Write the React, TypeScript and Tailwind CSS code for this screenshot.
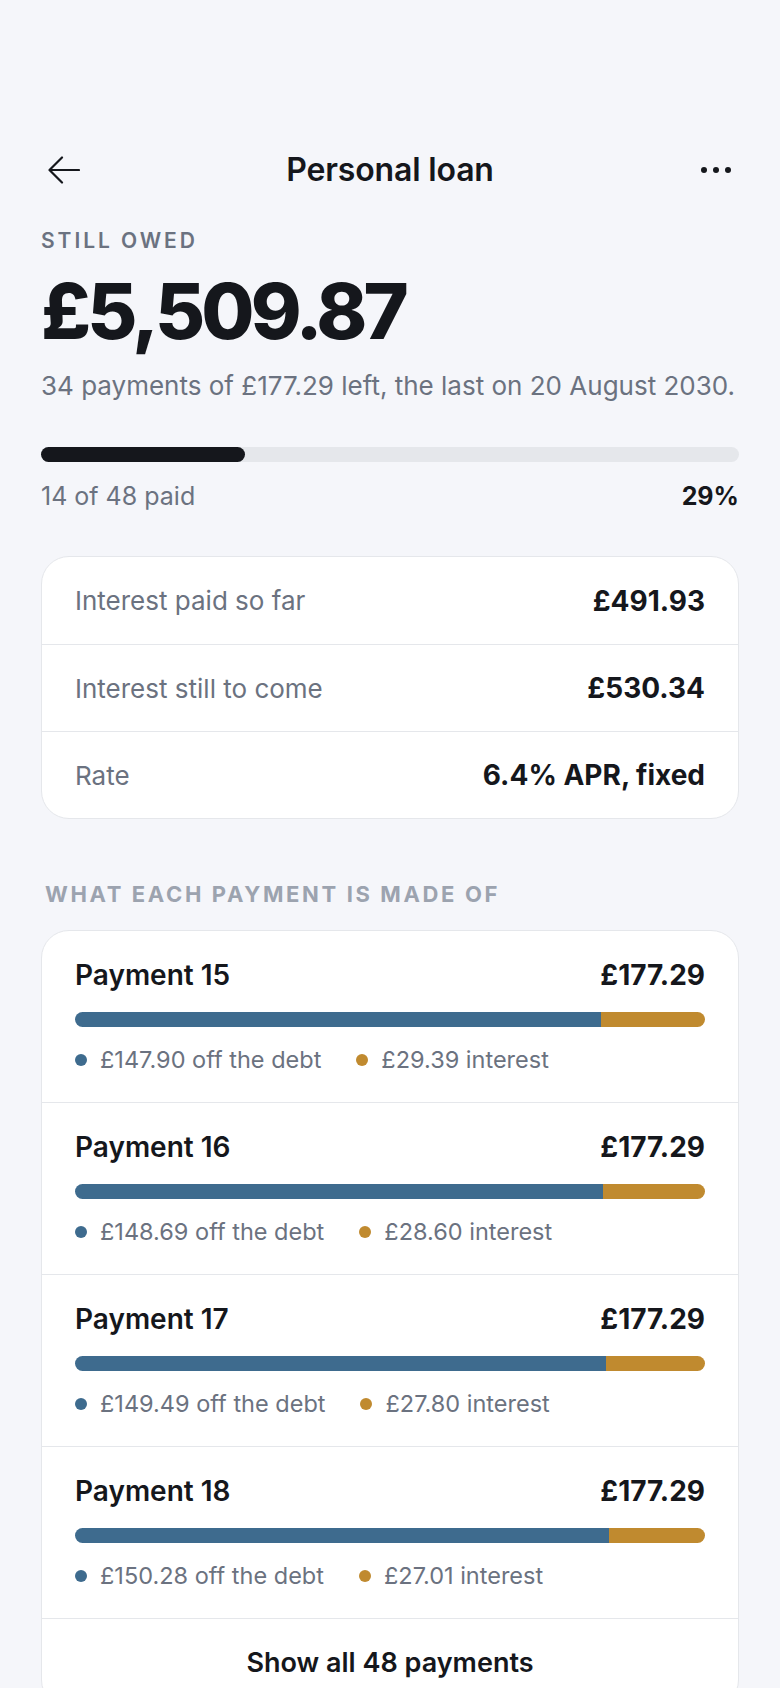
import React from "react";

const payments = [
  { n: 15, principal: 147.9, interest: 29.39 },
  { n: 16, principal: 148.69, interest: 28.6 },
  { n: 17, principal: 149.49, interest: 27.8 },
  { n: 18, principal: 150.28, interest: 27.01 },
];

const total = 177.29;

const details = [
  { label: "Interest paid so far", value: "£491.93" },
  { label: "Interest still to come", value: "£530.34" },
  { label: "Rate", value: "6.4% APR, fixed" },
];

function BackArrow() {
  return (
    <svg width="32" height="28" viewBox="0 0 32 28" fill="none" stroke="#15171c" strokeWidth="2.2" strokeLinecap="round" strokeLinejoin="round">
      <path d="M31 14H2" />
      <path d="M14 1.5L1.5 14L14 26.5" />
    </svg>
  );
}

export default function App() {
  return (
    <div className="min-h-[1688px] bg-[#f5f6fa] px-[41px] pt-[146px] font-['Inter',sans-serif] text-[#15171c]">
      {/* Header */}
      <div className="flex h-12 items-center justify-between">
        <button className="flex h-12 w-14 items-center pl-[7px]" aria-label="Back">
          <BackArrow />
        </button>
        <h1 className="text-[32px] leading-10 font-semibold tracking-[-0.005em]">Personal loan</h1>
        <button className="flex h-12 w-14 items-center justify-end gap-[6px] pr-[8px]" aria-label="More">
          <span className="h-[6px] w-[6px] rounded-full bg-[#15171c]" />
          <span className="h-[6px] w-[6px] rounded-full bg-[#15171c]" />
          <span className="h-[6px] w-[6px] rounded-full bg-[#15171c]" />
        </button>
      </div>

      {/* Balance */}
      <div className="mt-[33px] text-[21px] leading-7 font-semibold tracking-[0.14em] text-[#6b7280]">STILL OWED</div>
      <div className="mt-[18px] text-[77px] leading-none font-extrabold tracking-[-0.05em]">£5,509.87</div>
      <p className="mt-[18px] text-[26px] leading-9 text-[#6b7280]">
        34 payments of £177.29 left, the last on 20 August 2030.
      </p>

      {/* Progress */}
      <div className="mt-[43px] h-[15px] w-full rounded-full bg-[#e5e7eb]">
        <div className="h-full rounded-full bg-[#15171c]" style={{ width: `${(14 / 48) * 100}%` }} />
      </div>
      <div className="mt-[17px] flex items-center justify-between text-[25px] leading-[34px]">
        <span className="text-[#6b7280]">14 of 48 paid</span>
        <span className="font-bold">29%</span>
      </div>

      {/* Details */}
      <div className="mt-[43px] overflow-hidden rounded-[28px] border border-[#e5e7eb] bg-white">
        {details.map((d, i) => (
          <div
            key={d.label}
            className={`flex h-[87px] items-center justify-between px-[33px] ${i > 0 ? "border-t border-[#e5e7eb]" : ""}`}
          >
            <span className="text-[26px] text-[#6b7280]">{d.label}</span>
            <span className="text-[28px] font-bold">{d.value}</span>
          </div>
        ))}
      </div>

      {/* Breakdown */}
      <div className="mt-[60px] px-1 text-[22px] leading-[30px] font-bold tracking-[0.12em] text-[#9ca3af]">
        WHAT EACH PAYMENT IS MADE OF
      </div>
      <div className="mt-[21px] overflow-hidden rounded-[28px] border border-[#e5e7eb] bg-white">
        {payments.map((p) => (
          <div key={p.n} className="border-b border-[#e5e7eb] px-[33px] pt-[26px] pb-[26px]">
            <div className="flex items-center justify-between text-[28px] leading-9">
              <span className="font-semibold">Payment {p.n}</span>
              <span className="font-bold">£{total.toFixed(2)}</span>
            </div>
            <div className="mt-[19px] flex h-[15px] w-full overflow-hidden rounded-full">
              <div className="h-full bg-[#3e6b8e]" style={{ width: `${(p.principal / total) * 100}%` }} />
              <div className="h-full flex-1 bg-[#c08a2f]" />
            </div>
            <div className="mt-[17px] flex items-center gap-[35px] text-[23.5px] leading-8 text-[#6b7280]">
              <span className="flex items-center gap-[13px]">
                <span className="h-[12px] w-[12px] rounded-full bg-[#3e6b8e]" />
                £{p.principal.toFixed(2)} off the debt
              </span>
              <span className="flex items-center gap-[13px]">
                <span className="h-[12px] w-[12px] rounded-full bg-[#c08a2f]" />
                £{p.interest.toFixed(2)} interest
              </span>
            </div>
          </div>
        ))}
        <button className="w-full pt-[27px] pb-[27px] text-center text-[27px] leading-[34px] font-semibold">
          Show all 48 payments
        </button>
      </div>
    </div>
  );
}
